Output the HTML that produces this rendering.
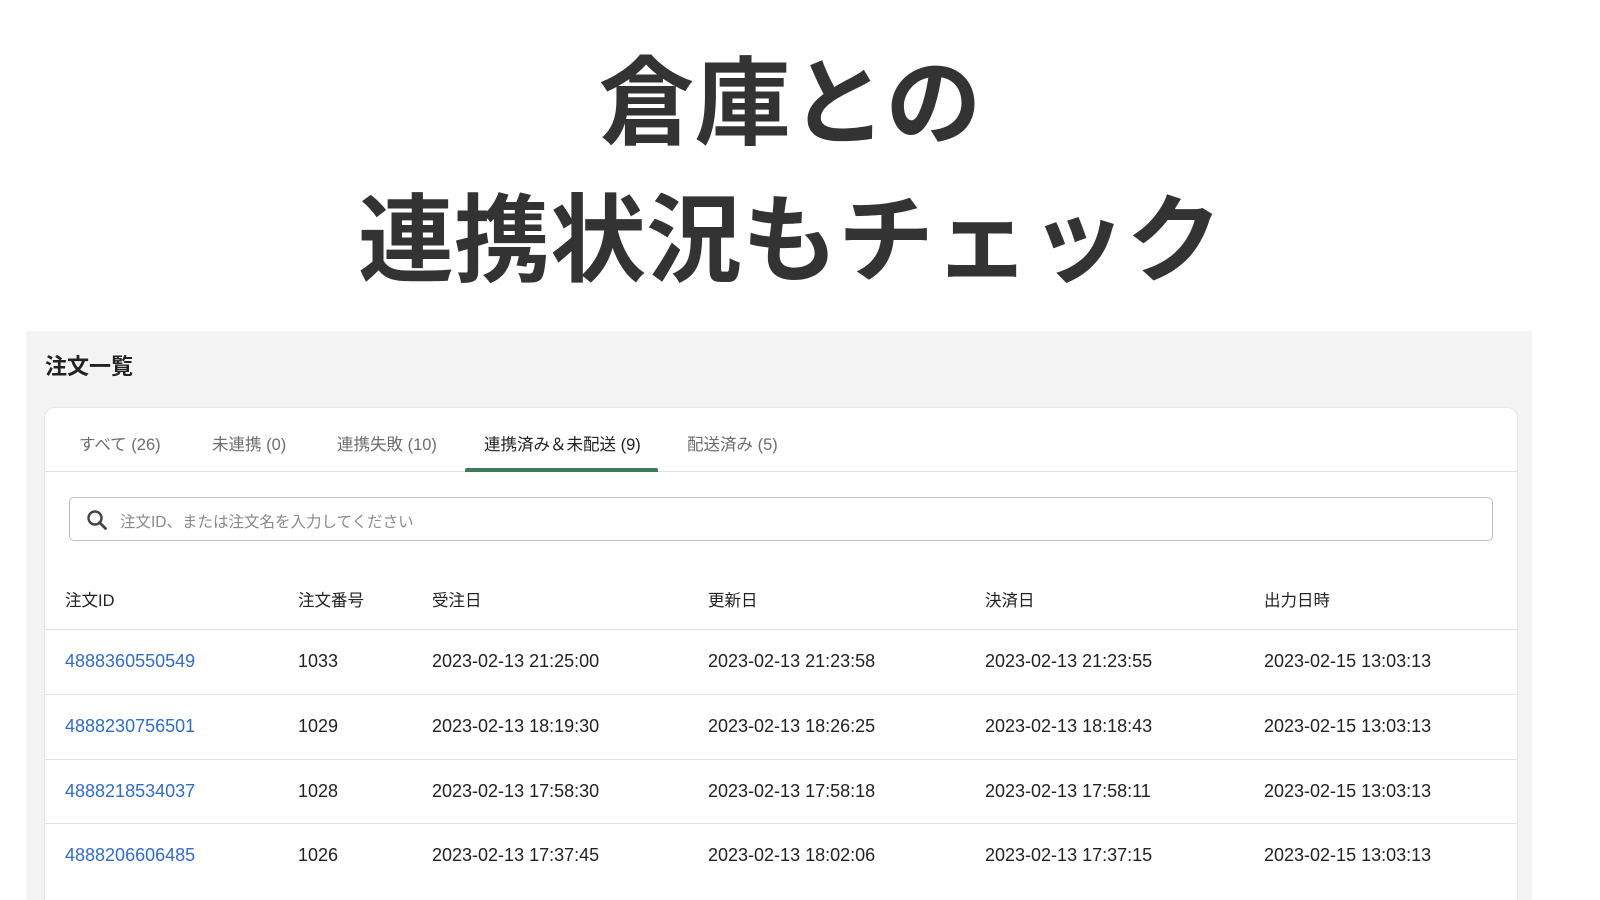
<!DOCTYPE html>
<html><head><meta charset="utf-8"><style>
*{margin:0;padding:0;box-sizing:border-box}
html,body{width:1600px;height:900px;overflow:hidden}
body{background:#fff;font-family:"Liberation Sans","Noto Sans CJK JP",sans-serif;color:#333;position:relative}
.t{position:absolute;left:0;width:1580px;text-align:center;font-size:96px;font-weight:bold;color:#333;line-height:1}
.panel{position:absolute;left:26px;top:331px;width:1506px;height:600px;background:#f4f4f4}
.h{position:absolute;left:45px;top:349px;font-size:22px;font-weight:bold;color:#222}
.card{position:absolute;left:45px;top:408px;width:1472px;height:520px;background:#fff;border-radius:10px;box-shadow:0 0 2px rgba(0,0,0,.15)}
.tabs{position:absolute;left:0;top:0;width:100%;height:64px;border-bottom:1px solid #e1e1e1}
.tab{position:absolute;top:23px;font-size:16.5px;color:#6d6d6d}
.ul{position:absolute;left:420px;top:60px;width:193px;height:4px;background:#3d7a5a;border-radius:2px 2px 0 0}
.search{position:absolute;left:24px;top:89px;width:1424px;height:44px;border:1px solid #bdbdbd;border-radius:5px}
.search span{position:absolute;left:50px;top:12px;font-size:15.5px;color:#8a8a8a}
.c{position:absolute;font-size:18px;color:#222}
.hd{font-size:16.5px}
.line{position:absolute;left:0;width:100%;height:1px;background:#e3e3e3}
a{color:#2f6bd1;text-decoration:none}
</style></head><body>
<div class="t" style="top:57px">倉庫との</div>
<div class="t" style="top:194px">連携状況もチェック</div>
<div class="panel"></div>
<div class="h">注文一覧</div>
<div class="card">
 <div class="tabs">
  <div class="tab" style="left:34px">すべて (26)</div>
  <div class="tab" style="left:167px">未連携 (0)</div>
  <div class="tab" style="left:292px">連携失敗 (10)</div>
  <div class="tab" style="left:439px;color:#222">連携済み＆未配送 (9)</div>
  <div class="tab" style="left:642px">配送済み (5)</div>
  <div class="ul"></div>
 </div>
 <div class="search">
  <svg style="position:absolute;left:16px;top:11px" width="22" height="22" viewBox="0 0 22 22"><circle cx="9" cy="9" r="6.5" fill="none" stroke="#444" stroke-width="2.4"/><path d="M13.5 13.5L19.5 19.5" stroke="#444" stroke-width="2.8" stroke-linecap="round"/></svg>
  <span>注文ID、または注文名を入力してください</span>
 </div>
 <div class="c hd" style="left:20px;top:179px">注文ID</div>
 <div class="c hd" style="left:253px;top:179px">注文番号</div>
 <div class="c hd" style="left:387px;top:179px">受注日</div>
 <div class="c hd" style="left:663px;top:179px">更新日</div>
 <div class="c hd" style="left:940px;top:179px">決済日</div>
 <div class="c hd" style="left:1219px;top:179px">出力日時</div>
 <div class="line" style="top:221px"></div>
 <div class="c" style="left:20px;top:243px"><a>4888360550549</a></div><div class="c" style="left:253px;top:243px">1033</div><div class="c" style="left:387px;top:243px">2023-02-13 21:25:00</div><div class="c" style="left:663px;top:243px">2023-02-13 21:23:58</div><div class="c" style="left:940px;top:243px">2023-02-13 21:23:55</div><div class="c" style="left:1219px;top:243px">2023-02-15 13:03:13</div>
 <div class="line" style="top:286px"></div>
 <div class="c" style="left:20px;top:308px"><a>4888230756501</a></div><div class="c" style="left:253px;top:308px">1029</div><div class="c" style="left:387px;top:308px">2023-02-13 18:19:30</div><div class="c" style="left:663px;top:308px">2023-02-13 18:26:25</div><div class="c" style="left:940px;top:308px">2023-02-13 18:18:43</div><div class="c" style="left:1219px;top:308px">2023-02-15 13:03:13</div>
 <div class="line" style="top:351px"></div>
 <div class="c" style="left:20px;top:373px"><a>4888218534037</a></div><div class="c" style="left:253px;top:373px">1028</div><div class="c" style="left:387px;top:373px">2023-02-13 17:58:30</div><div class="c" style="left:663px;top:373px">2023-02-13 17:58:18</div><div class="c" style="left:940px;top:373px">2023-02-13 17:58:11</div><div class="c" style="left:1219px;top:373px">2023-02-15 13:03:13</div>
 <div class="line" style="top:415px"></div>
 <div class="c" style="left:20px;top:437px"><a>4888206606485</a></div><div class="c" style="left:253px;top:437px">1026</div><div class="c" style="left:387px;top:437px">2023-02-13 17:37:45</div><div class="c" style="left:663px;top:437px">2023-02-13 18:02:06</div><div class="c" style="left:940px;top:437px">2023-02-13 17:37:15</div><div class="c" style="left:1219px;top:437px">2023-02-15 13:03:13</div>
</div>
</body></html>
